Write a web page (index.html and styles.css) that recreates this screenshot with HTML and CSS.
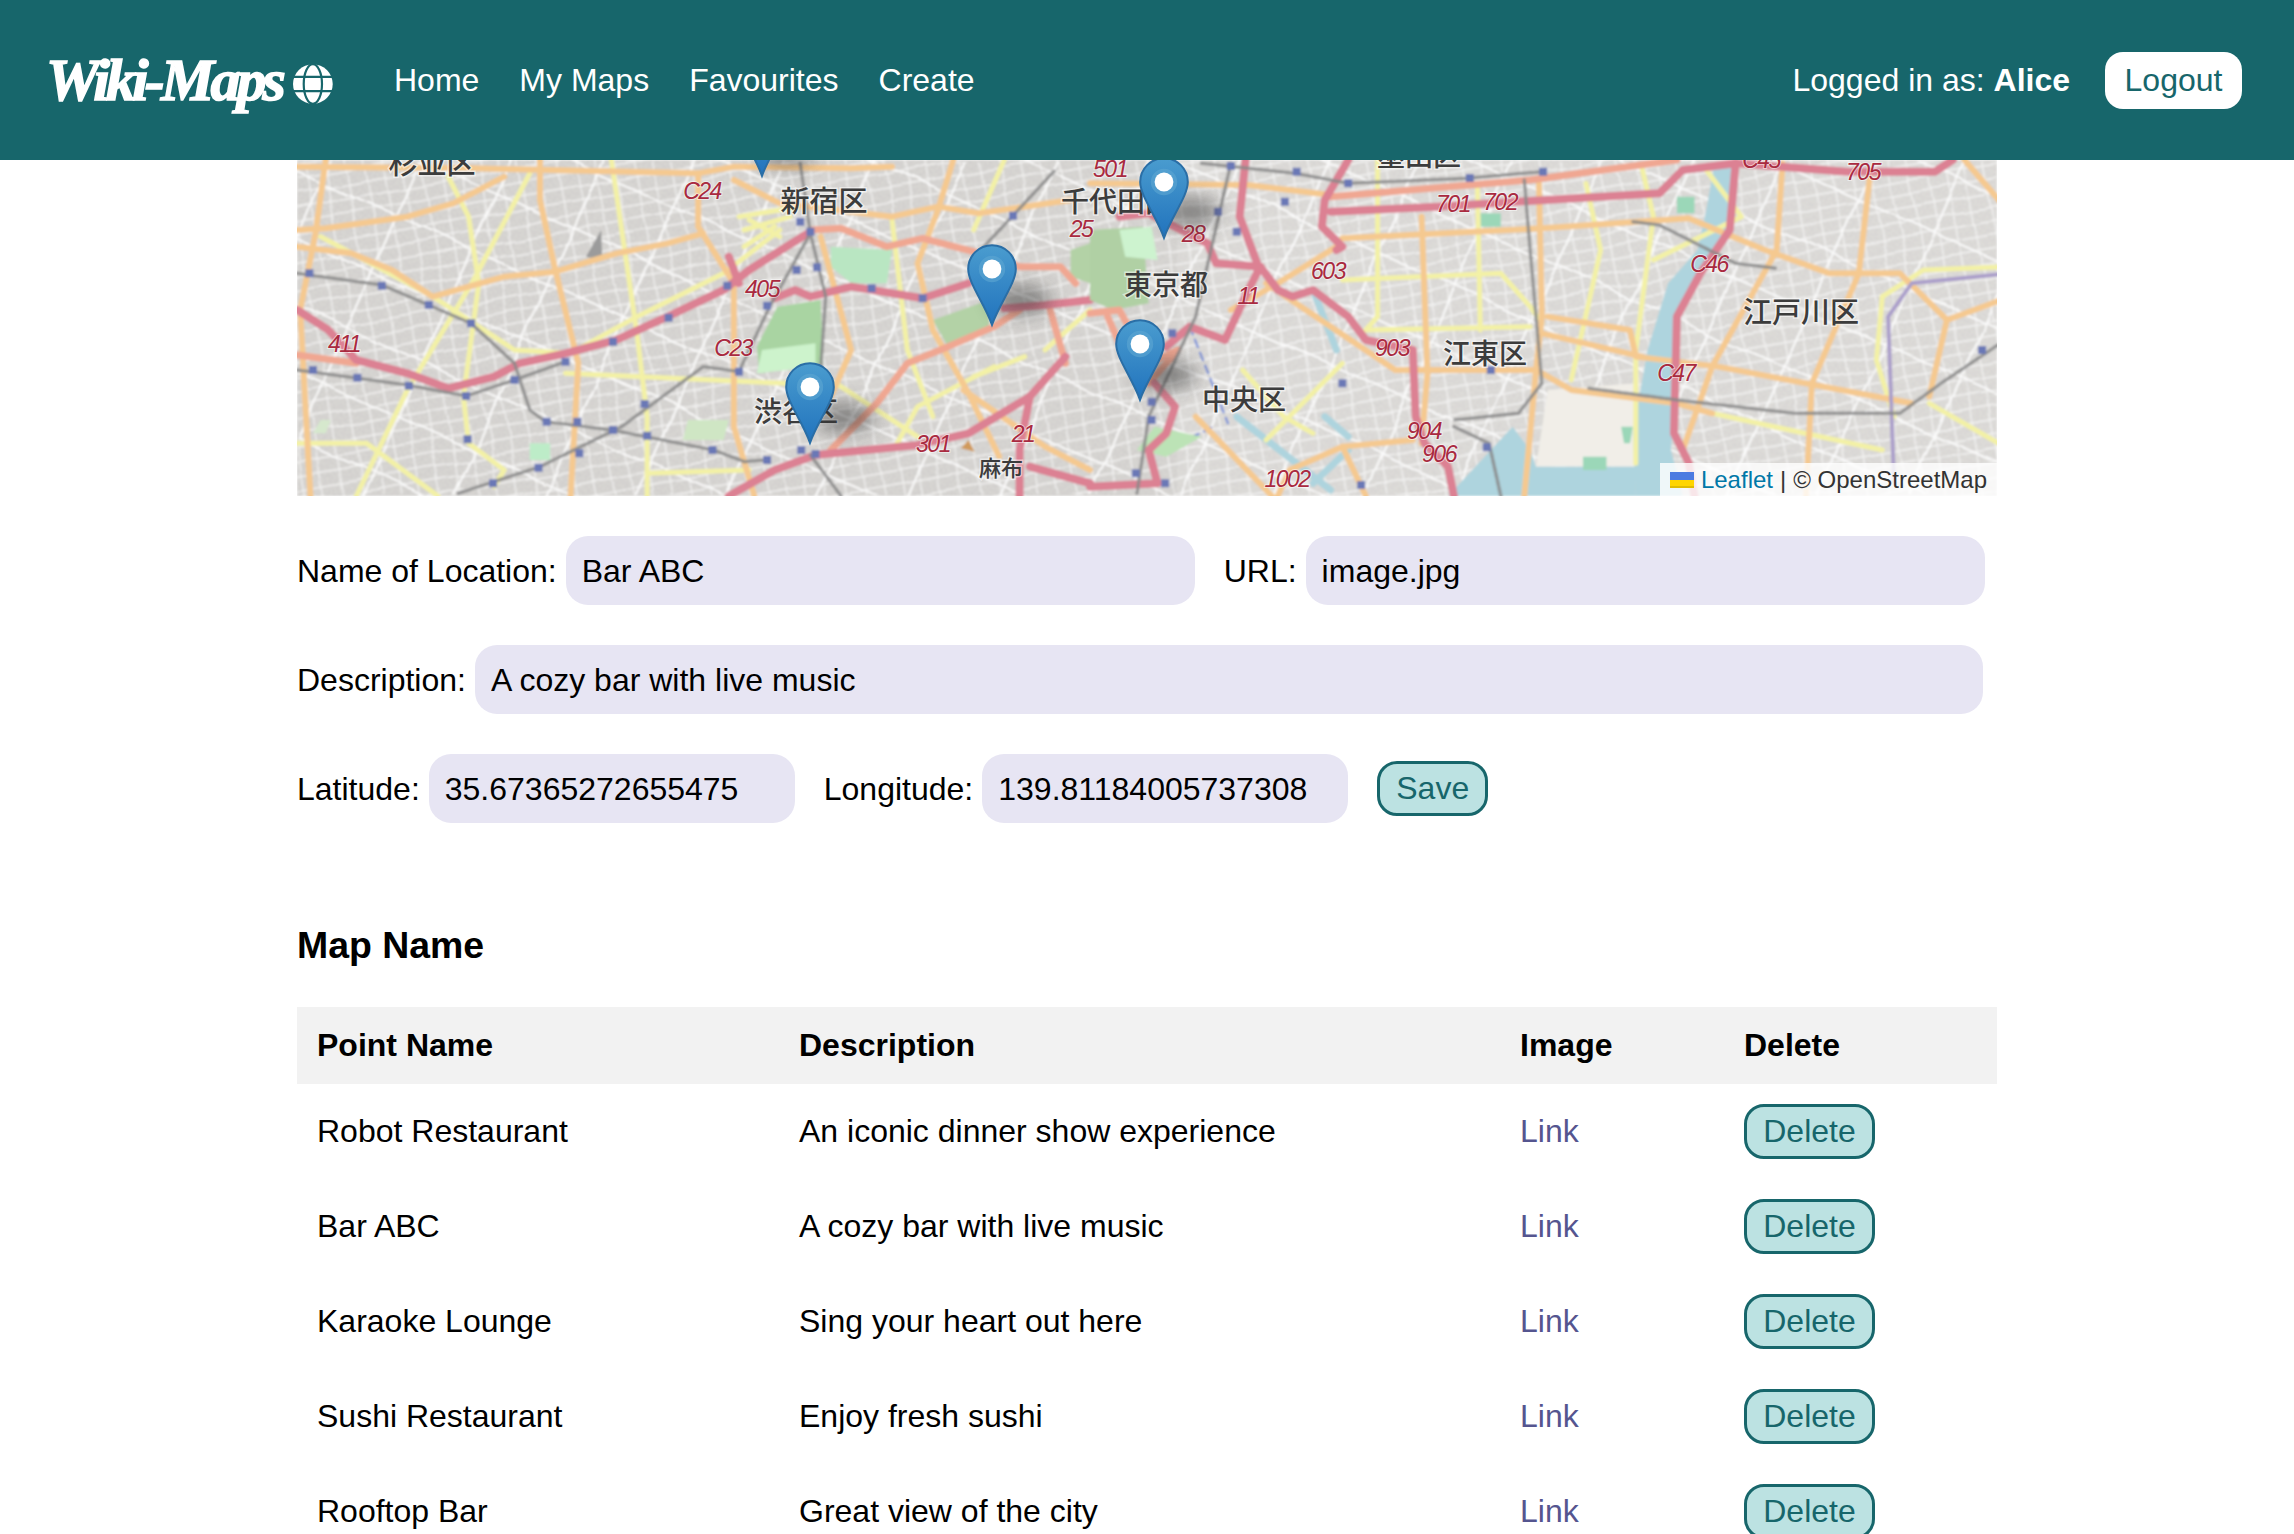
FILE: index.html
```html
<!DOCTYPE html>
<html lang="en">
<head>
<meta charset="utf-8">
<title>Wiki-Maps</title>
<link rel="stylesheet" href="styles.css">
</head>
<body>
<header class="topbar">
  <a class="brand" href="#">
    <span class="brand-text">Wiki-Maps</span>
    <svg class="globe" viewBox="-20 -20 40 40" aria-hidden="true">
      <circle r="20" fill="#fff"/>
      <path d="M-20 -7.2H20M-20 7.2H20" stroke="#17666b" stroke-width="2.4" fill="none"/>
      <ellipse rx="9.2" ry="20" fill="none" stroke="#17666b" stroke-width="2.2"/>
    </svg>
  </a>
  <nav class="nav">
    <a href="#">Home</a>
    <a href="#">My Maps</a>
    <a href="#">Favourites</a>
    <a href="#">Create</a>
  </nav>
  <div class="session">
    <span>Logged in as: <strong>Alice</strong></span>
    <button class="logout">Logout</button>
  </div>
</header>

<main class="page">
  <section class="map">
    <svg class="map-canvas" viewBox="0 0 1700 336" xmlns="http://www.w3.org/2000/svg" aria-label="Map of Tokyo">
      <defs>
        <filter id="grain" x="0" y="0" width="100%" height="100%">
          <feTurbulence type="fractalNoise" baseFrequency="0.5" numOctaves="2" seed="7"/>
          <feColorMatrix type="matrix" values="0 0 0 0 0.62  0 0 0 0 0.61  0 0 0 0 0.6  2.2 0 0 0 -0.55"/>
        </filter>
        <filter id="wobble" x="0" y="0" width="100%" height="100%">
          <feTurbulence type="fractalNoise" baseFrequency="0.02" numOctaves="1" seed="3"/>
          <feDisplacementMap in="SourceGraphic" scale="12" xChannelSelector="R" yChannelSelector="G"/>
        </filter>
        <filter id="soft"><feGaussianBlur stdDeviation="0.8"/></filter>
        <filter id="shade"><feGaussianBlur stdDeviation="9"/></filter>
        <pattern id="streets" width="19" height="14" patternUnits="userSpaceOnUse" patternTransform="rotate(-10)">
          <path d="M0 4H19M8 0V14" stroke="#fff" stroke-width="1.3" fill="none" opacity=".7"/>
        </pattern>
        <pattern id="streets2" width="83" height="61" patternUnits="userSpaceOnUse" patternTransform="rotate(24)">
          <path d="M0 11H83M31 0V61" stroke="#fff" stroke-width="2.2" fill="none" opacity=".85"/>
        </pattern>
        <linearGradient id="pinfill" x1="0" y1="0" x2="0" y2="1">
          <stop offset="0" stop-color="#4a9ccf"/>
          <stop offset="1" stop-color="#2173bd"/>
        </linearGradient>
        <symbol id="pin" viewBox="0 0 25 41" overflow="visible">
          <path d="M12.5 .6C5.9 .6 .6 5.9 .6 12.5C.6 19.5 8.6 29.5 12.5 40.4C16.4 29.5 24.4 19.5 24.4 12.5C24.4 5.9 19.1 .6 12.5 .6Z" fill="url(#pinfill)" stroke="#2a6ea6" stroke-width="1"/>
          <circle cx="12.5" cy="12.5" r="6.6" fill="#5ea6d2" opacity=".6"/>
          <circle cx="12.5" cy="12.5" r="4.7" fill="#fff"/>
        </symbol>
      </defs>

      <g filter="url(#soft)">
        <rect width="1700" height="336" fill="#dcdad6"/>
        <rect width="1700" height="336" filter="url(#grain)"/>
        <g filter="url(#wobble)">
          <rect width="1700" height="336" fill="url(#streets)"/>
          <rect width="1700" height="336" fill="url(#streets2)"/>
        </g>
        <rect class="east-wash" x="880" width="820" height="336"/>

        <!-- west sheet: coordinates read from the left half of the map -->
        <g transform="translate(-7,-10) scale(.5102,.3333)">
          <path d="M1060 290L1180 300L1170 400L1100 400L1060 350Z" fill="#b9e6c2"/>
          <path d="M955 470L1040 450L1045 640L920 670L915 590Z" fill="#a9d4a2"/>
          <path d="M925 600L1030 580L1030 650L915 670Z" fill="#cdf3cc"/>
          <path d="M1260 510L1370 450L1370 530L1290 590Z" fill="#b3d2a6"/>
          <path d="M1530 300L1568 280V400L1530 380Z" fill="#b3d2a6"/>
          <path d="M470 880L510 880L510 930L470 930Z" fill="#bdecc8"/>
          <path d="M780 810L860 810L850 870L770 870Z" fill="#cfe6c4"/>
          <path d="M60 810L80 810L70 850L45 850Z" fill="#d6e8cd"/>
          <path d="M580 320L610 240L612 330Z" fill="#9b9b9b"/>
          <g class="road yellow">
            <path d="M310 80L350 200L370 400L340 740L350 880L420 960L400 1010"/>
            <path d="M470 70L360 390L230 720L130 1038"/>
            <path d="M60 260L280 440L440 600L550 610L680 500L850 370L960 240"/>
            <path d="M630 30L680 550L700 800L700 1038"/>
            <path d="M14 880L150 880L290 1038"/>
            <path d="M540 670L970 700L1070 700L1230 860"/>
            <path d="M1400 30L1340 240M1180 210L1210 600L1260 800M1380 650L1230 770L1190 880M1440 620L1340 680M1568 480L1480 600"/>
            <path d="M700 970L900 960M880 200L1000 170M900 210L960 260M890 240L980 200M890 290L950 230"/>
          </g>
          <g class="road orange">
            <path d="M14 50L360 55L800 70L870 50L1100 55L1180 50"/>
            <path d="M14 240L70 235L230 200L320 160L420 80"/>
            <path d="M14 290L120 310L200 360L280 440L420 380L520 365L640 310L740 280L810 250"/>
            <path d="M70 30L50 250L20 480L40 1038"/>
            <path d="M490 30L490 150L520 360L565 640L550 1038"/>
            <path d="M800 70L800 230L870 400L870 830L910 1038"/>
            <path d="M870 90L960 160L1180 200L1270 170L1350 190L1530 150"/>
            <path d="M1300 30L1270 180L1230 340L1260 540L1330 730L1390 920"/>
            <path d="M1040 260L1100 600L1060 740"/>
            <path d="M1320 720L1480 890L1568 960"/>
          </g>
          <g class="road salmon">
            <path d="M1060 900L1150 760L1210 640L1290 590L1380 530L1430 480"/>
            <path d="M1020 240L1080 235L1170 290L1240 265L1340 305L1430 350L1510 350L1540 400"/>
            <path d="M14 615L130 640"/>
            <path d="M1490 480L1520 640"/>
          </g>
          <g class="road motorway">
            <path d="M14 480L75 540L130 630L230 670L310 715L400 680L450 640L540 610L640 570L740 500L850 420L900 360L1020 245"/>
            <path d="M950 445L990 420L1020 440L1100 410L1240 445L1330 400"/>
            <path d="M1400 475L1480 465L1568 450"/>
            <path d="M860 1038L950 960L1030 915L1230 885L1330 850L1450 740L1520 620"/>
            <path d="M1430 1038L1430 900L1450 740M1450 950L1568 1000"/>
            <path d="M880 400L860 320"/>
          </g>
          <g class="rail">
            <path d="M14 370L180 405L355 520L440 640L470 780L500 815L630 840L830 900L890 935L930 930"/>
            <path d="M14 660L230 705L345 738L440 690L540 635"/>
            <path d="M330 1030L490 950L650 830L810 650L880 665"/>
            <path d="M880 665L940 470L1020 250L1050 440L1040 660"/>
            <path d="M1020 915L1080 1038"/>
            <path d="M1000 40L1020 250"/>
            <path d="M1360 290L1417 197L1500 60"/>
          </g>
          <path class="stations" d="M38 370h.1M180 407h.1M272 465h.1M355 520h.1M45 660h.1M132 683h.1M233 707h.1M345 738h.1M440 690h.1M540 635h.1M633 575h.1M742 503h.1M857 407h.1M935 467h.1M880 665h.1M1140 415h.1M1240 445h.1M993 360h.1M1033 352h.1M1020 245h.1M1000 215h.1M1417 197h.1M503 815h.1M563 815h.1M633 840h.1M700 857h.1M828 900h.1M935 930h.1M695 762h.1M348 868h.1M567 910h.1M487 953h.1M398 1000h.1M1002 900h.1M1030 912h.1"/>
          <path d="M1315 895L1330 870L1342 905Z" fill="#d09a5c"/>
        </g>

        <!-- east sheet -->
        <g transform="translate(793,-10) scale(.5869,.3333)">
          <path d="M780 720L930 700V950L760 950Z" fill="#f1eee8"/>
          <path d="M610 1038L720 830L750 900L760 950L930 950V1038Z" fill="#aed4de"/>
          <path d="M1062 60L1100 40L1088 230L1040 350L1008 490L990 900L1010 1038H930L925 850L950 600L985 400L1035 300L1050 180Z" fill="#aed4de"/>
          <path class="canal" d="M380 420L420 600M250 800L410 1020M380 1000L440 900M400 800L440 860"/>
          <path class="dash-line" d="M170 530L235 820M130 900L210 830"/>
          <path d="M0 240L90 230L100 460L40 480L0 450Z" fill="#b0d0a4"/>
          <path d="M50 240L105 230L115 330L60 320Z" fill="#cdf3cf"/>
          <path d="M110 830L190 860L130 920L80 900Z" fill="#bce3b6"/>
          <path d="M840 920H880V960H840ZM665 190H700V230H665ZM1000 140H1030V190H1000ZM905 830L925 830L920 880L910 880Z" fill="#9bd7b8"/>
          <g class="road yellow">
            <path d="M490 30L490 500L470 540L750 530"/>
            <path d="M430 390L700 370L750 470L770 520"/>
            <path d="M660 100L665 540"/>
            <path d="M845 100L870 300L820 690"/>
            <path d="M940 50L960 200L930 600L930 940"/>
            <path d="M1050 60L1110 200L960 330"/>
            <path d="M1060 790L1350 900M1430 760L1568 900"/>
            <path d="M1350 440L1420 360L1568 350"/>
            <path d="M1350 440L1340 630L1370 800"/>
            <path d="M260 660L330 800L380 850M300 870L430 640"/>
          </g>
          <g class="road orange">
            <path d="M0 100L270 105L410 135"/>
            <path d="M430 265L770 235L1020 205L1150 300L1260 370L1380 370L1460 510L1568 440"/>
            <path d="M1460 510L1430 740"/>
            <path d="M420 290L320 400L240 480"/>
            <path d="M300 400L520 660L760 660L820 720L1000 760L1060 790"/>
            <path d="M780 500L920 540L930 620L1070 650L1400 760"/>
            <path d="M770 550L940 620"/>
            <path d="M565 200L575 670L565 880"/>
            <path d="M765 100L770 500L760 660L740 1038"/>
            <path d="M1180 40L1170 300L1060 650L1010 900"/>
            <path d="M1330 60L1310 370L1230 700L1220 1038"/>
            <path d="M1490 30L1568 190"/>
            <path d="M550 870L430 890L340 960L320 1038"/>
            <path d="M430 890L470 1038"/>
            <path d="M180 800L310 1038"/>
          </g>
          <path class="boundary" d="M1370 1000L1360 500L1400 400L1568 370"/>
          <g class="road salmon">
            <path d="M410 140L750 90L1000 30"/>
            <path d="M0 490L50 480L100 640L150 600L100 700"/>
            <path d="M30 500L60 620"/>
          </g>
          <g class="road motorway">
            <path d="M50 200L100 190L150 235L200 280L215 340L290 350L320 420L345 440L380 420L440 500L470 570L550 600L555 800L570 880L610 950L620 1038"/>
            <path d="M290 350L270 420L230 570L170 530L130 590"/>
            <path d="M265 30L255 200L285 340"/>
            <path d="M440 30L400 150L395 230L430 290L420 300"/>
            <path d="M410 185L590 170L970 130L1010 60L1100 40L1290 65L1440 65L1470 30"/>
            <path d="M1100 40L1090 240L1040 370L1000 500L995 850L1020 938L1030 1038"/>
            <path d="M110 700L145 770L130 850L100 900L115 1000L0 1010"/>
          </g>
          <g class="rail">
            <path d="M925 215L970 225L1100 340L1170 355"/>
            <path d="M850 715L1000 750L1200 790L1380 790L1450 700L1568 560"/>
            <path d="M740 90L750 300L770 700L730 790L620 810"/>
            <path d="M620 830L680 880L700 1038"/>
            <path d="M240 40L180 500L100 800L80 1030"/>
            <path d="M190 40L350 70L440 100L640 85L770 65"/>
          </g>
          <path class="stations" d="M240 48h.1M352 65h.1M440 100h.1M647 84h.1M772 65h.1M332 155h.1M218 185h.1M250 245h.1M140 550h.1M105 755h.1M105 810h.1M78 970h.1M128 1000h.1M430 700h.1M683 660h.1M676 892h.1M462 1005h.1M1520 600h.1"/>
        </g>
      </g>

      <g class="area-labels">
        <text x="135" y="14">杉並区</text>
        <text x="527" y="52">新宿区</text>
        <text x="820" y="52" class="small-area">千代田区</text>
        <text x="869" y="135" class="small-area">東京都</text>
        <text x="1122" y="6" class="small-area">墨田区</text>
        <text x="1188" y="204" class="small-area">江東区</text>
        <text x="1504" y="163">江戸川区</text>
        <text x="947" y="250" class="small-area">中央区</text>
        <text x="499" y="262" class="small-area">渋谷区</text>
        <text x="704" y="316" class="tiny-area">麻布</text>
      </g>
      <g class="road-labels">
        <text x="405" y="39">C24</text><text x="465" y="137">405</text><text x="47" y="192">411</text>
        <text x="436" y="196">C23</text><text x="636" y="292">301</text><text x="726" y="282">21</text>
        <text x="813" y="17">501</text><text x="784" y="77">25</text><text x="896" y="82">28</text>
        <text x="951" y="144">11</text><text x="1031" y="119">603</text><text x="1156" y="52">701</text>
        <text x="1203" y="50">702</text><text x="1566" y="20">705</text><text x="1464" y="8">C45</text>
        <text x="1412" y="112">C46</text><text x="1379" y="221">C47</text><text x="1095" y="196">903</text>
        <text x="1127" y="279">904</text><text x="1142" y="302">906</text><text x="990" y="327">1002</text>
      </g>

      <g class="pins">
        <g filter="url(#shade)" fill="#333" opacity=".5">
          <ellipse cx="490" cy="-8" rx="28" ry="14"/>
          <ellipse cx="548" cy="258" rx="30" ry="15"/>
          <ellipse cx="724" cy="140" rx="30" ry="15"/>
          <ellipse cx="893" cy="52" rx="30" ry="15"/>
          <ellipse cx="870" cy="215" rx="30" ry="15"/>
        </g>
        <use href="#pin" x="440" y="-65" width="50" height="82"/>
        <use href="#pin" x="488" y="202" width="50" height="82"/>
        <use href="#pin" x="670" y="84" width="50" height="82"/>
        <use href="#pin" x="842" y="-3" width="50" height="82"/>
        <use href="#pin" x="818" y="159" width="50" height="82"/>
      </g>
    </svg>
    <div class="attribution">
      <svg class="flag" viewBox="0 0 12 8" aria-hidden="true"><path fill="#4c7be1" d="M0 0h12v4H0z"/><path fill="#ffd500" d="M0 4h12v3H0z"/><path fill="#e0bc00" d="M0 7h12v1H0z"/></svg>
      <a href="#">Leaflet</a><span class="sep">|</span><span>© OpenStreetMap</span>
    </div>
  </section>

  <form class="point-form">
    <div class="form-row">
      <label class="field"><span>Name of Location:</span><input class="input w-name" value="Bar ABC"></label>
      <label class="field"><span>URL:</span><input class="input w-url" value="image.jpg"></label>
    </div>
    <div class="form-row">
      <label class="field"><span>Description:</span><input class="input w-desc" value="A cozy bar with live music"></label>
    </div>
    <div class="form-row">
      <label class="field"><span>Latitude:</span><input class="input w-coord" value="35.67365272655475"></label>
      <label class="field"><span>Longitude:</span><input class="input w-coord" value="139.81184005737308"></label>
      <button type="button" class="teal-btn save">Save</button>
    </div>
  </form>

  <h3 class="map-name">Map Name</h3>

  <table class="points">
    <colgroup><col class="c1"><col class="c2"><col class="c3"><col class="c4"></colgroup>
    <thead>
      <tr><th>Point Name</th><th>Description</th><th>Image</th><th>Delete</th></tr>
    </thead>
    <tbody>
      <tr><td>Robot Restaurant</td><td>An iconic dinner show experience</td><td><a href="#">Link</a></td><td><button class="teal-btn">Delete</button></td></tr>
      <tr><td>Bar ABC</td><td>A cozy bar with live music</td><td><a href="#">Link</a></td><td><button class="teal-btn">Delete</button></td></tr>
      <tr><td>Karaoke Lounge</td><td>Sing your heart out here</td><td><a href="#">Link</a></td><td><button class="teal-btn">Delete</button></td></tr>
      <tr><td>Sushi Restaurant</td><td>Enjoy fresh sushi</td><td><a href="#">Link</a></td><td><button class="teal-btn">Delete</button></td></tr>
      <tr><td>Rooftop Bar</td><td>Great view of the city</td><td><a href="#">Link</a></td><td><button class="teal-btn">Delete</button></td></tr>
    </tbody>
  </table>
</main>
</body>
</html>
```

FILE: styles.css
```css
* { box-sizing: border-box; }

html, body {
  margin: 0;
  height: 100%;
  overflow: hidden;
  background: #fff;
}

body {
  font-family: "Liberation Sans", Arial, sans-serif;
  font-size: 32px;
  color: #000;
}

/* top bar */
.topbar {
  display: flex;
  align-items: center;
  height: 160px;
  padding: 0 52px 0 46px;
  background: #17666b;
  color: #fff;
}

.brand {
  display: flex;
  align-items: center;
  width: 287px;
  color: #fff;
  text-decoration: none;
}

.brand-text {
  width: 248px;
  font-family: "Liberation Serif", serif;
  font-size: 60px;
  font-weight: 700;
  font-style: italic;
  letter-spacing: -3.9px;
  line-height: 60px;
  white-space: nowrap;
  -webkit-text-stroke: 1.5px #fff;
}

.globe {
  width: 40px;
  height: 40px;
  margin-left: 1px;
  margin-top: 8px;
}

.nav {
  display: flex;
  gap: 40px;
  margin-left: 61px;
}

.nav a {
  color: #fff;
  text-decoration: none;
}

.session {
  display: flex;
  align-items: center;
  gap: 35px;
  margin-left: auto;
}

.logout {
  height: 57px;
  width: 137px;
  padding: 0;
  border: 0;
  border-radius: 18px;
  background: #fff;
  color: #17666b;
  font: inherit;
}

/* page column */
.page {
  width: 1700px;
  margin: 0 auto;
}

/* map */
.map {
  position: relative;
  height: 336px;
  overflow: hidden;
}

.map-canvas {
  display: block;
  width: 1700px;
  height: 336px;
}

.east-wash {
  fill: #fff;
  opacity: .14;
}

.road path, .rail path, .canal, .dash-line, .boundary {
  fill: none;
  stroke-linejoin: round;
  stroke-linecap: round;
  vector-effect: non-scaling-stroke;
}

.yellow path { stroke: #f3f1a6; stroke-width: 5; }
.orange path { stroke: #f5c990; stroke-width: 6; }
.salmon path { stroke: #f0a792; stroke-width: 7; }
.motorway path { stroke: #dc8193; stroke-width: 8; }
.rail path { stroke: #8a8a8a; stroke-width: 3.5; stroke-dasharray: 5 2; opacity: .85; }
.canal { stroke: #aed4de; stroke-width: 7; }
.dash-line { stroke: #6f88d8; stroke-width: 2.5; stroke-dasharray: 8 6; opacity: .8; }
.boundary { stroke: #ab9fca; stroke-width: 4; }

.stations {
  fill: none;
  stroke: #6a78b6;
  stroke-width: 8;
  stroke-linecap: square;
  vector-effect: non-scaling-stroke;
}

.area-labels text {
  font-family: "Noto Sans CJK JP", "Liberation Sans", sans-serif;
  font-size: 29px;
  font-weight: 500;
  fill: #3c3c3c;
  stroke: #fff;
  stroke-width: 3px;
  stroke-opacity: .5;
  paint-order: stroke;
  text-anchor: middle;
}

.area-labels .small-area { font-size: 28px; }
.area-labels .tiny-area { font-size: 22px; }

.road-labels text {
  font-family: "Liberation Sans", sans-serif;
  font-size: 23px;
  font-style: italic;
  fill: #a92a40;
  stroke: #fff;
  stroke-width: 2px;
  stroke-opacity: .5;
  paint-order: stroke;
  text-anchor: middle;
  letter-spacing: -1.5px;
}

.attribution {
  position: absolute;
  right: 0;
  bottom: 0;
  display: flex;
  align-items: center;
  height: 33px;
  padding: 0 10px;
  background: rgba(255, 255, 255, .8);
  color: #333;
  font-size: 24px;
}

.attribution a {
  color: #0078a8;
  text-decoration: none;
}

.flag {
  width: 24px;
  height: 16px;
  margin-right: 7px;
}

.sep {
  margin: 0 7px;
}

/* form */
.point-form {
  display: flex;
  flex-direction: column;
  gap: 40px;
  margin-top: 40px;
}

.form-row {
  display: flex;
  align-items: center;
  gap: 29px;
}

.field {
  display: flex;
  align-items: center;
  gap: 9px;
}

.field span {
  padding-top: 2px;
}

.input {
  height: 69px;
  padding: 2px 16px 0;
  border: 0;
  border-radius: 22px;
  background: #e7e5f3;
  color: #000;
  font: inherit;
  outline: none;
}

.w-name { width: 629px; }
.w-url { width: 679px; }
.w-desc { width: 1508px; }
.w-coord { width: 366px; }

.teal-btn {
  height: 55px;
  padding: 0 18px;
  border: 3px solid #17666b;
  border-radius: 20px;
  background: #bce2e2;
  color: #17666b;
  font: inherit;
}

.save {
  width: 111px;
  padding: 0;
}

/* table */
.map-name {
  margin: 101px 0 40px;
  font-size: 37.44px;
  line-height: 43px;
}

.points {
  width: 1700px;
  table-layout: fixed;
  border-collapse: collapse;
}

.c1 { width: 482px; }
.c2 { width: 721px; }
.c3 { width: 224px; }
.c4 { width: 273px; }

.points th {
  height: 77px;
  padding: 0 20px;
  background: #f2f2f2;
  text-align: left;
}

.points td {
  height: 95px;
  padding: 20px;
}

.points a {
  color: #55558f;
  text-decoration: none;
}

.points .teal-btn {
  width: 131px;
  padding: 0;
}
```
